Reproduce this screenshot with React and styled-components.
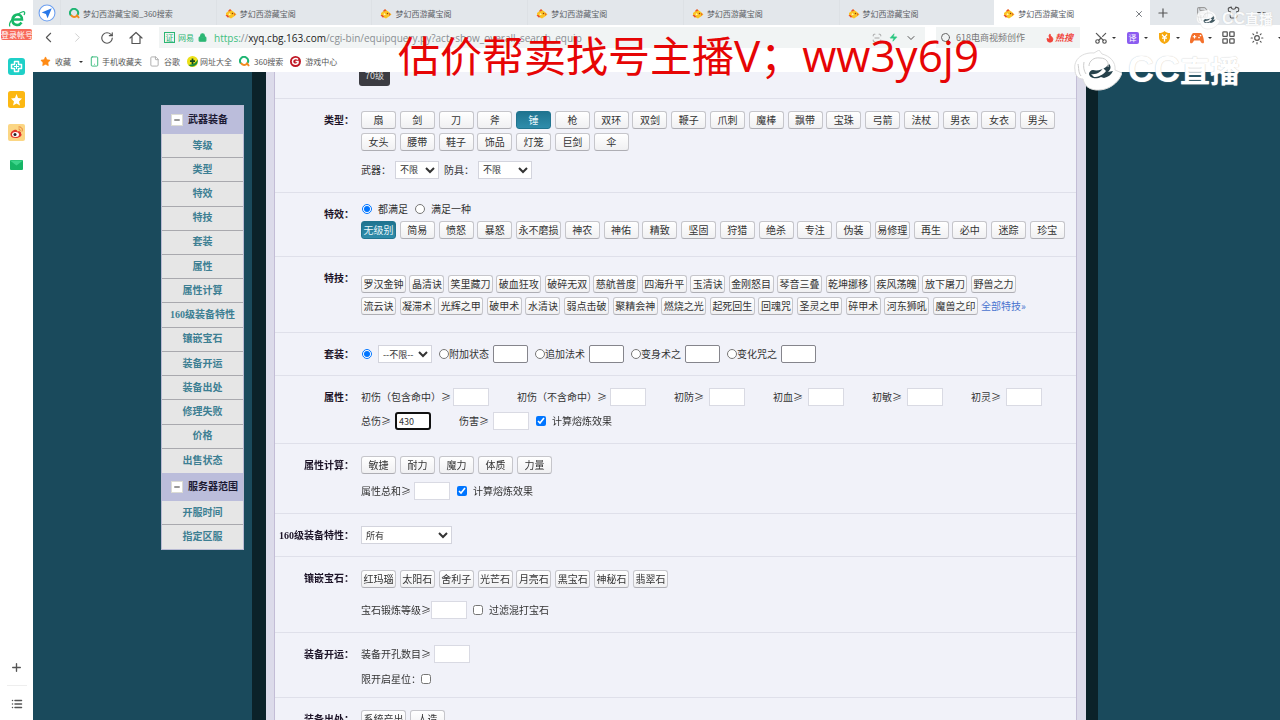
import React from "react";
import styled, { createGlobalStyle, css } from "styled-components";
import {
  ChevronLeft, ChevronRight, RotateCw, Lock, Zap, ChevronDown, Search, Flame,
  Scissors, LayoutGrid, Sun, Plus, Minus, X, Star, List, Smartphone, File, Shirt, Save, ScanLine,
} from "lucide-react";

const sans = '"Noto Sans CJK SC", "Liberation Sans", sans-serif';

const Global = createGlobalStyle`
  *, *::before, *::after { box-sizing: border-box; }
  body { margin: 0; background: #1a4a5c; overflow: hidden; }
  button, input, select { font-family: inherit; margin: 0; }
  a { color: inherit; text-decoration: none; }
`;

const Shell = styled.div`
  position: relative;
  display: flex;
  height: 100vh;
  overflow: hidden;
  font-family: ${sans};
  font-size: 10px;
  line-height: 16px;
  color: #333;
`;

/* ---------- left rail ---------- */
const Rail = styled.aside`
  flex: none;
  width: 33px;
  background: #fff;
  display: flex;
  flex-direction: column;
  align-items: center;
  padding: 10px 0 8px;
`;
const LoginTag = styled.a`
  width: 31px;
  height: 11px;
  margin: 1px 0 18px;
  border-radius: 2px;
  background: #f8695a;
  color: #fff;
  font-size: 8px;
  line-height: 11px;
  text-align: center;
  white-space: nowrap;
`;
const RailApps = styled.div`
  display: flex;
  flex-direction: column;
  gap: 16px;
  flex: 1;
`;
const IconButton = styled.button`
  display: flex;
  align-items: center;
  justify-content: center;
  flex: none;
  width: ${(p) => p.$w || 17}px;
  height: 17px;
  padding: 0;
  border: 0;
  background: none;
  color: ${(p) => p.$color || "#555"};
`;
const RailFoot = styled.div`
  display: flex;
  flex-direction: column;
  align-items: center;
  gap: 9px;
`;
const RailRule = styled.div`
  width: 20px;
  height: 1px;
  background: #eee;
`;

/* ---------- browser chrome ---------- */
const Main = styled.div`
  flex: 1;
  min-width: 0;
  display: flex;
  flex-direction: column;
`;
const TabBar = styled.div`
  flex: none;
  display: flex;
  align-items: center;
  height: 25px;
  background: #e3e7eb;
  padding-left: 4px;
`;
const TabList = styled.div`
  display: flex;
  flex: 0 1 1090px;
  min-width: 0;
  margin-left: 3px;
`;
const Tab = styled.a`
  flex: 1 1 0;
  min-width: 0;
  display: flex;
  align-items: center;
  gap: 3px;
  height: 25px;
  padding: 2px 6px 0 8px;
  font-size: 8px;
  white-space: nowrap;
  color: #5d6267;
  background: ${(p) => (p.$active ? "#fff" : "transparent")};
  border-left: 1px solid ${(p) => (p.$active ? "#fff" : "#dde1e5")};
  span { flex: 1; }
`;
const WindowTools = styled.div`
  display: flex;
  margin-left: 4px;
`;
const WindowKeys = styled.div`
  display: flex;
  gap: 11px;
  margin-left: 19px;
`;
const AddressBar = styled.div`
  flex: none;
  display: flex;
  align-items: center;
  height: 26px;
  padding: 0 0 1px 7px;
  background: #fff;
`;
const NavKeys = styled.div`
  display: flex;
  gap: 12px;
  margin-right: 15px;
`;
const UrlField = styled.div`
  flex: 1;
  min-width: 0;
  display: flex;
  align-items: center;
  height: 21px;
  padding: 0 6px 0 5px;
  background: #f1f4f4;
  color: #2bb673;
  white-space: nowrap;
`;
const Cert = styled.span`
  width: 11px;
  height: 11px;
  margin-right: 3px;
  border: 1px solid #2bb673;
  font-size: 8px;
  line-height: 9px;
  text-align: center;
`;
const Url = styled.span`
  flex: 1;
  margin-left: 7px;
  font-family: "Open Sans", sans-serif;
  font-size: 10px;
  color: #8a8f93;
  em { font-style: normal; color: #3fbf80; }
  b { font-weight: 400; color: #222; }
`;
const SiteName = styled.span`
  font-size: 8px;
  margin-right: 4px;
`;
const SearchField = styled.label`
  display: flex;
  align-items: center;
  gap: 4px;
  width: 144px;
  height: 21px;
  margin-left: 11px;
  padding-left: 4px;
  background: #f1f4f4;
  color: #666;
  input {
    width: 85px;
    padding: 0;
    border: 0;
    background: none;
    font-size: 9px;
    color: #777;
  }
`;
const Hot = styled.b`
  display: flex;
  align-items: center;
  color: #f0453c;
  font-size: 9px;
  font-style: italic;
  white-space: nowrap;
`;
const Tools = styled.div`
  display: flex;
  align-items: center;
  width: 200px;
  gap: 2px;
  padding-left: 12px;
  overflow: hidden;
`;
const Caret = styled.i`
  width: 0;
  margin: 0 6px 0 1px;
  border: 2px solid transparent;
  border-top-color: #333;
  border-bottom: 0;
`;
const TranslateMark = styled.span`
  width: 12px;
  height: 12px;
  border-radius: 2px;
  background: #8b5cf0;
  color: #fff;
  font-size: 8px;
  line-height: 12px;
  text-align: center;
`;
const Bookmarks = styled.nav`
  flex: none;
  display: flex;
  align-items: center;
  height: 21px;
  padding-left: 7px;
  background: #fff;
  font-size: 8px;
  color: #555;
`;
const Bookmark = styled.a`
  display: flex;
  align-items: center;
  gap: ${(p) => p.$gap || 2}px;
  height: 16px;
  margin-right: 7px;
  white-space: nowrap;
`;

/* ---------- page ---------- */
const Page = styled.main`
  flex: 1;
  min-height: 0;
  overflow: hidden;
  display: flex;
  justify-content: center;
  align-items: flex-start;
  padding-right: 54px;
  background: #1a4a5c;
`;
const SideMenu = styled.nav`
  flex: none;
  width: 83px;
  margin: 33px 8px 0 0;
  border: 1px solid #b9bbd4;
  background: #e6e6e6;
  font-family: "Liberation Serif", ${sans};
  font-weight: 700;
`;
const MenuHead = styled.div`
  display: flex;
  align-items: center;
  gap: 5px;
  height: 28px;
  padding-left: 9px;
  background: #bbbddb;
  color: #1c1a33;
  white-space: nowrap;
`;
const Toggle = styled.button`
  display: flex;
  align-items: center;
  justify-content: center;
  flex: none;
  width: 12px;
  height: 12px;
  padding: 0;
  border: 1px solid #dcdcd4;
  background: #fff;
  color: #333;
`;
const MenuList = styled.div`
  display: grid;
  grid-auto-rows: 1fr;
  min-height: ${(p) => p.$h}px;
`;
const MenuLink = styled.a`
  display: flex;
  align-items: center;
  justify-content: center;
  border-bottom: 1px solid #a9a9ae;
  color: #3d7f93;
  white-space: nowrap;
  &:last-child { border-bottom: 0; }
`;
const Frame = styled.div`
  flex: 0 1 846px;
  border: solid #0b2229;
  border-width: 0 12px 0 14px;
`;
const Mat = styled.div`
  padding: 0 9px 0 8px;
  background: #dcdbea;
`;
const Panel = styled.form`
  border: solid #c3bdd6;
  border-width: 0 1px;
  background: #f1f2f9;
  min-height: 100vh;
`;
const Section = styled.section`
  display: flex;
  border-bottom: 1px solid #dfe0ea;
`;
const SectionLabel = styled.h3`
  flex: none;
  width: 79px;
  margin: 0 7px 0 0;
  padding-top: 13px;
  font-family: "Liberation Serif", ${sans};
  font-size: 10px;
  line-height: 18px;
  font-weight: 700;
  text-align: right;
  white-space: nowrap;
  color: #1d1428;
`;
const SectionBody = styled.div`
  flex: 1;
  min-width: 0;
  display: flex;
  flex-direction: column;
  gap: ${(p) => p.$gap || 4}px;
  padding: ${(p) => p.$top || 12}px 0 ${(p) => p.$bottom || 12}px;
`;
const ChipGrid = styled.div`
  display: grid;
  grid-template-columns: repeat(18, 1fr);
  row-gap: 4px;
  max-width: 698px;
  margin-bottom: 5px;
`;
const ChipRow = styled.div`
  display: flex;
  flex: 0 1 auto;
  justify-content: ${(p) => (p.$w ? "space-between" : "flex-start")};
  gap: ${(p) => (p.$w ? 0 : 4)}px;
  width: ${(p) => (p.$w ? p.$w + "px" : "auto")};
  max-width: 100%;
`;
const Chip = styled.button`
  flex: none;
  width: ${(p) => (p.$long ? 45 : 35)}px;
  height: 18px;
  padding: 0;
  border: 1px solid #c6c6cb;
  border-bottom-color: #aeaeb4;
  border-radius: 3px;
  background: linear-gradient(#fff, #f0f0f2);
  color: #333;
  font-size: 10px;
  line-height: 16px;
  white-space: nowrap;
  text-align: center;
  ${(p) => p.$on && css`
    border-color: #20748f;
    background: linear-gradient(#1f7490, #2f8dab);
    color: #e6f5fa;
  `}
`;
const LevelChip = styled.button`
  align-self: flex-start;
  width: 31px;
  height: 20px;
  margin: -18px 0 0 -2px;
  padding: 0;
  border: 0;
  border-radius: 3px;
  background: #3c3c42;
  color: #ddd;
  font-size: 9px;
  line-height: 16px;
`;
const Line = styled.div`
  display: flex;
  align-items: center;
  gap: ${(p) => p.$gap || 0}px;
  height: ${(p) => p.$h || 18}px;
  white-space: nowrap;
`;
const Field = styled.label`
  display: flex;
  align-items: center;
  span { flex: none; min-width: ${(p) => p.$w || 0}px; }
`;
const TextBox = styled.input`
  width: ${(p) => (p.$strong ? 35 : 36)}px;
  height: 18px;
  padding: 0 2px;
  border: 1px solid ${(p) => (p.$strong ? "#85858c" : "#d9dae3")};
  border-radius: ${(p) => (p.$strong ? 2 : 0)}px;
  background: #fff;
  font-size: 9px;
  color: #333;
  &:focus {
    outline: 0;
    border: 2px solid #111;
    border-radius: 3px;
  }
`;
const Mark = styled.input`
  flex: none;
  width: 10px;
  height: 10px;
  &[type="radio"] { margin-left: 1px; }
`;
const Option = styled.label`
  display: flex;
  align-items: center;
  gap: ${(p) => p.$gap ?? 6}px;
`;
const Select = styled.select`
  width: ${(p) => p.$w}px;
  height: 18px;
  padding: 0;
  border: 1px solid #d3d4dd;
  background: #fff;
  color: #333;
  font-size: 9px;
`;
const MoreLink = styled.a`
  color: #4a74cf;
  line-height: 18px;
`;

/* ---------- stream overlays ---------- */
const Banner = styled.div`
  position: absolute;
  left: 398px;
  top: 25px;
  color: #e60505;
  font-family: "Open Sans", "Noto Sans CJK SC", sans-serif;
  font-size: 42px;
  line-height: 60px;
  white-space: nowrap;
  span { font-size: 44px; }
`;
const Watermark = styled.div`
  position: absolute;
  right: ${(p) => (p.$small ? 7 : 40)}px;
  top: ${(p) => (p.$small ? 8 : 50)}px;
  display: flex;
  align-items: center;
  gap: ${(p) => (p.$small ? 2 : 6)}px;
  height: ${(p) => (p.$small ? 22 : 42)}px;
  color: #fff;
  font-family: "Liberation Sans", "Noto Sans CJK SC", sans-serif;
  font-weight: 700;
  font-size: ${(p) => (p.$small ? 14 : 30)}px;
  opacity: ${(p) => (p.$small ? 0.85 : 1)};
  text-shadow: 0 0 1px #bbb;
  white-space: nowrap;
  b { font-size: ${(p) => (p.$small ? 16 : 36)}px; }
`;

const GameIcon = () => (
  <svg width="12" height="10" viewBox="0 0 24 20">
    <path d="M2 8 7 4l4-3 4 3 3 2 5 5-5 4-6 4-6-3-4-4z" fill="#fbc324" />
    <path d="M6 4 10 0l3 3-5 2zM1 12l4 0 4 4-4 1zM18 8l3 2-2 4z" fill="#e8502c" />
    <circle cx="15" cy="9" r="1.5" fill="#8a3a10" />
    <path d="m8 8 4 3-5 2z" fill="#fff6b8" />
  </svg>
);
const RingIcon = () => (
  <svg width="11" height="11" viewBox="0 0 22 22" fill="none" strokeWidth="4">
    <path d="M4 15a8 8 0 1 1 13-1" stroke="#1fb573" />
    <path d="M4 14c3 5 9 5 12 1l4 5" stroke="#f28a1e" />
  </svg>
);
const BrowserLogo = () => (
  <svg width="18" height="18" viewBox="0 0 36 36" fill="none" stroke="#18b868">
    <path d="M10 19h18c0-14-18-13-19 0-1 12 13 14 18 6" strokeWidth="5" />
    <path d="M4 33C-1 25 17 7 31 3c3 0 3 3 1 7" strokeWidth="2.5" />
  </svg>
);
const Compass = () => (
  <svg width="18" height="18" viewBox="0 0 34 34">
    <circle cx="17" cy="17" r="15" fill="#fff" stroke="#6c9ff0" strokeWidth="2" />
    <path d="M26 8 7 16l8 3 3 8z" fill="#2878e8" />
  </svg>
);
const HomeIcon = () => (
  <svg width="14" height="14" viewBox="0 0 28 28" fill="none" stroke="#555" strokeWidth="2.4" strokeLinejoin="round" strokeLinecap="round">
    <path d="M2 14 14 3l12 11M6 11v14h16V11" />
  </svg>
);
const PadIcon = () => (
  <svg width="14" height="12" viewBox="0 0 28 24">
    <path d="M7 2h14c4 0 7 12 7 18 0 4-5 4-8-3H8C5 24 0 24 0 20 0 14 3 2 7 2z" fill="#f4702b" />
    <path d="M9 6v7M5.5 9.5h7" stroke="#fff" strokeWidth="2.2" />
    <circle cx="18" cy="11" r="1.7" fill="#fff" />
    <circle cx="21" cy="7" r="1.7" fill="#fff" />
  </svg>
);
const HealthIcon = () => (
  <svg width="17" height="17" viewBox="0 0 34 34">
    <rect width="34" height="34" rx="6" fill="#1fd0c8" />
    <path d="M13 7h8v6h6v8h-6v6h-8v-6H7v-8h6z" fill="none" stroke="#fff" strokeWidth="3" strokeLinejoin="round" />
    <path d="M17 12v10M12 17h10" stroke="#fff" strokeWidth="2" />
  </svg>
);
const FavIcon = () => (
  <svg width="17" height="17" viewBox="0 0 34 34">
    <rect width="34" height="34" rx="5" fill="#fcb813" />
    <path d="m17 6 3 8 8 1-6 6 2 8-7-4-7 4 2-8-6-6 8-1z" fill="#fff" />
  </svg>
);
const WeiboIcon = () => (
  <svg width="17" height="17" viewBox="0 0 34 34">
    <rect width="34" height="34" rx="4" fill="#fbd684" />
    <path d="M5 21c0-6 8-11 12-9 2 1 1 3 1 3s9-2 8 4c4 4-3 9-10 9S5 26 5 21z" fill="#e1352c" />
    <ellipse cx="15" cy="21" rx="7" ry="5" fill="#fff" />
    <circle cx="14" cy="21" r="3" fill="#222" />
    <path d="M21 6c6-1 9 4 7 9M21 10c3 0 4 2 3 4" fill="none" stroke="#e8772c" strokeWidth="2" />
  </svg>
);
const MailIcon = () => (
  <svg width="17" height="17" viewBox="0 0 34 34">
    <rect x="4" y="6" width="26" height="20" rx="2" fill="#16b566" />
    <path d="M4 7h26L17 17z" fill="#3bd48a" />
  </svg>
);
const PortalIcon = () => (
  <svg width="11" height="11" viewBox="0 0 22 22">
    <circle cx="11" cy="11" r="11" fill="#ece019" />
    <path d="M3 18A11 11 0 0 0 21 7c-2 6-8 10-18 11z" fill="#1d8a3a" />
    <path d="M11 5v11M6 10h10" stroke="#174a20" strokeWidth="3.5" />
  </svg>
);
const GameCenterIcon = () => (
  <svg width="11" height="11" viewBox="0 0 22 22">
    <circle cx="11" cy="11" r="11" fill="#c01825" />
    <path d="M16 7c-4-4-11-1-11 4s7 8 11 3v-3h-5" fill="none" stroke="#fff" strokeWidth="3" />
  </svg>
);
const ShieldIcon = () => (
  <svg width="13" height="13" viewBox="0 0 26 26">
    <path d="M2 4c5 0 8-1 11-4 3 3 6 4 11 4v9c0 7-6 11-11 13C8 24 2 20 2 13z" fill="#f7a90f" />
    <path d="m8 7 5 6 5-6M8 14h10M13 13v8" fill="none" stroke="#fff" strokeWidth="2.5" />
  </svg>
);
const CCLogo = ({ w, h }) => (
  <svg width={w} height={h} viewBox="0 0 48 42">
    <path d="M1 20C-1 9 9 2 20 3l5-3 3 4c8 2 14 8 13 16l7 3c-3 10-14 18-26 17C12 39 10 33 9 29 4 29 1 25 1 20z" fill="#fff" stroke="#ddd" />
    <path d="M15 24c0-2 2-4 4-4 4 1 9 0 13-3l3-3c3 3 1 6-1 8l5-1c-2 4-5 6-9 7l-3-1c-4 2-11 2-12-3z" fill="#26414b" />
    <path d="M17 24c5 1 10-2 12-6l3 3c-3 4-8 6-12 6z" fill="#fff" />
    <path d="M4 14c1 4 0 8 3 12M10 12c-1 5 0 9 2 12M15 16c0-5 5-9 11-8 7 0 9 5 8 9" fill="none" stroke="#ccc" />
  </svg>
);

const types = "扇 剑 刀 斧 锤 枪 双环 双剑 鞭子 爪刺 魔棒 飘带 宝珠 弓箭 法杖 男衣 女衣 男头 女头 腰带 鞋子 饰品 灯笼 巨剑 伞".split(" ");
const effects = "无级别 简易 愤怒 暴怒 永不磨损 神农 神佑 精致 坚固 狩猎 绝杀 专注 伪装 易修理 再生 必中 迷踪 珍宝".split(" ");
const skillsA = "罗汉金钟 晶清诀 笑里藏刀 破血狂攻 破碎无双 慈航普度 四海升平 玉清诀 金刚怒目 琴音三叠 乾坤挪移 疾风荡魄 放下屠刀 野兽之力".split(" ");
const skillsB = "流云诀 凝滞术 光辉之甲 破甲术 水清诀 弱点击破 聚精会神 燃烧之光 起死回生 回魂咒 圣灵之甲 碎甲术 河东狮吼 魔兽之印".split(" ");
const gems = "红玛瑙 太阳石 舍利子 光芒石 月亮石 黑宝石 神秘石 翡翠石".split(" ");
const menuA = "等级 类型 特效 特技 套装 属性 属性计算 160级装备特性 镶嵌宝石 装备开运 装备出处 修理失败 价格 出售状态".split(" ");

const chips = (names, active) =>
  names.map((n) => (
    <Chip type="button" key={n} $long={n.length > 3} $on={n === active}>{n}</Chip>
  ));

const Block = ({ label, children, ...body }) => (
  <Section>
    <SectionLabel>{label}</SectionLabel>
    <SectionBody {...body}>{children}</SectionBody>
  </Section>
);

const NumberField = ({ label, w, ...rest }) => (
  <Field $w={w}><span>{label}</span><TextBox {...rest} /></Field>
);

export default function App() {
  return (
    <Shell>
      <Global />
      <Rail>
        <BrowserLogo />
        <LoginTag href="#">登录帐号</LoginTag>
        <RailApps>
          <IconButton aria-label="健康"><HealthIcon /></IconButton>
          <IconButton aria-label="收藏"><FavIcon /></IconButton>
          <IconButton aria-label="微博"><WeiboIcon /></IconButton>
          <IconButton aria-label="邮件"><MailIcon /></IconButton>
        </RailApps>
        <RailFoot>
          <IconButton aria-label="添加"><Plus size={13} strokeWidth={2.5} /></IconButton>
          <RailRule />
          <IconButton aria-label="列表"><List size={12} strokeWidth={3} /></IconButton>
        </RailFoot>
      </Rail>

      <Main>
        <TabBar>
          <IconButton $w={20} aria-label="导航"><Compass /></IconButton>
          <TabList>
            <Tab href="#"><RingIcon /><span>梦幻西游藏宝阁_360搜索</span></Tab>
            {[1, 2, 3, 4, 5].map((i) => (
              <Tab href="#" key={i}><GameIcon /><span>梦幻西游藏宝阁</span></Tab>
            ))}
            <Tab href="#" $active><GameIcon /><span>梦幻西游藏宝阁</span><X size={10} /></Tab>
          </TabList>
          <WindowTools>
            <IconButton aria-label="新标签"><Plus size={14} strokeWidth={2} /></IconButton>
          </WindowTools>
          <WindowKeys>
            <IconButton $w={24} $color="#999" aria-label="保存"><Save size={13} /></IconButton>
            <IconButton aria-label="皮肤"><Shirt size={13} /></IconButton>
            <IconButton aria-label="最小化"><Minus size={13} /></IconButton>
          </WindowKeys>
        </TabBar>

        <AddressBar>
          <NavKeys>
            <IconButton aria-label="后退"><ChevronLeft size={17} strokeWidth={1.5} /></IconButton>
            <IconButton aria-label="前进" $color="#ccc"><ChevronRight size={15} strokeWidth={1.5} /></IconButton>
            <IconButton aria-label="刷新"><RotateCw size={14} strokeWidth={2} /></IconButton>
            <IconButton aria-label="主页"><HomeIcon /></IconButton>
          </NavKeys>
          <UrlField>
            <Cert>证</Cert>
            <SiteName>网易</SiteName>
            <Lock size={9} fill="#2bb673" strokeWidth={3} />
            <Url><em>https:</em>//<b>xyq.cbg.163.com</b>/cgi-bin/equipquery.py?act=show_overall_search_equip</Url>
            <IconButton aria-label="扫描" $color="#999"><ScanLine size={10} /></IconButton>
            <IconButton aria-label="加速" $color="#2bc780"><Zap size={9} fill="#2bc780" strokeWidth={1} /></IconButton>
            <IconButton aria-label="展开"><ChevronDown size={12} /></IconButton>
          </UrlField>
          <SearchField>
            <Search size={12} />
            <input aria-label="搜索" defaultValue="618电商视频创作" />
            <Hot><Flame size={10} fill="#f0453c" />热搜</Hot>
          </SearchField>
          <Tools>
            <IconButton aria-label="截图"><Scissors size={14} transform="rotate(-90)" /></IconButton><Caret />
            <IconButton aria-label="翻译"><TranslateMark>译</TranslateMark></IconButton><Caret />
            <IconButton aria-label="安全"><ShieldIcon /></IconButton><Caret />
            <IconButton aria-label="游戏"><PadIcon /></IconButton><Caret />
            <IconButton aria-label="扩展"><LayoutGrid size={15} /></IconButton>
            <IconButton $w={36} aria-label="亮度"><Sun size={14} /></IconButton>
            <Caret />
          </Tools>
        </AddressBar>

        <Bookmarks>
          <Bookmark href="#" $gap={4}><Star size={11} fill="#ff8a14" color="#ff8a14" strokeWidth={1} />收藏</Bookmark>
          <Caret />
          <Bookmark href="#"><Smartphone size={11} color="#2bb673" />手机收藏夹</Bookmark>
          <Bookmark href="#" $gap={4}><File size={11} color="#aaa" />谷歌</Bookmark>
          <Bookmark href="#"><PortalIcon />网址大全</Bookmark>
          <Bookmark href="#" $gap={4}><RingIcon />360搜索</Bookmark>
          <Bookmark href="#" $gap={4}><GameCenterIcon />游戏中心</Bookmark>
        </Bookmarks>

        <Page>
          <SideMenu>
            <MenuHead><Toggle type="button" aria-label="收起武器装备"><Minus size={8} strokeWidth={3} /></Toggle>武器装备</MenuHead>
            <MenuList $h={339}>
              {menuA.map((m) => <MenuLink href="#" key={m}>{m}</MenuLink>)}
            </MenuList>
            <MenuHead><Toggle type="button" aria-label="收起服务器范围"><Minus size={8} strokeWidth={3} /></Toggle>服务器范围</MenuHead>
            <MenuList $h={48}>
              <MenuLink href="#">开服时间</MenuLink>
              <MenuLink href="#">指定区服</MenuLink>
            </MenuList>
          </SideMenu>

          <Frame>
            <Mat>
              <Panel onSubmit={(e) => e.preventDefault()}>
                <Block label="">
                  <LevelChip type="button">70级</LevelChip>
                </Block>

                <Block label="类型：" $bottom={13}>
                  <ChipGrid>{chips(types, "锤")}</ChipGrid>
                  <Line $gap={5} $h={19}>
                    <Option $gap={4}>武器：<Select $w={44}><option>不限</option></Select></Option>
                    <Option $gap={4}>防具：<Select $w={54}><option>不限</option></Select></Option>
                  </Line>
                </Block>

                <Block label="特效：" $top={8} $bottom={17}>
                  <Line $gap={6} $h={16}>
                    <Option><Mark type="radio" name="fx" defaultChecked />都满足</Option>
                    <Option><Mark type="radio" name="fx" />满足一种</Option>
                  </Line>
                  <ChipRow $w={704}>{chips(effects, "无级别")}</ChipRow>
                </Block>

                <Block label="特技：" $top={18} $bottom={17}>
                  <ChipRow $w={655}>{chips(skillsA)}</ChipRow>
                  <Line $gap={3}>
                    <ChipRow $w={617}>{chips(skillsB)}</ChipRow>
                    <MoreLink href="#">全部特技»</MoreLink>
                  </Line>
                </Block>

                <Block label="套装：">
                  <Line $gap={6}>
                    <Mark type="radio" name="suit" aria-label="不限" defaultChecked />
                    <Select $w={54} aria-label="套装"><option>--不限--</option></Select>
                    {["附加状态", "追加法术", "变身术之", "变化咒之"].map((n) => (
                      <Line key={n} $gap={4}>
                        <Option $gap={0}><Mark type="radio" name="suit" />{n}</Option>
                        <TextBox $strong aria-label={n} />
                      </Line>
                    ))}
                  </Line>
                </Block>

                <Block label="属性：" $gap={6} $bottom={13}>
                  <Line $gap={28}>
                    <NumberField w={92} label="初伤（包含命中）≥" />
                    <NumberField w={93} label="初伤（不含命中）≥" />
                    <NumberField w={35} label="初防≥" />
                    <NumberField w={35} label="初血≥" />
                    <NumberField w={35} label="初敏≥" />
                    <NumberField w={35} label="初灵≥" />
                  </Line>
                  <Line $gap={28}>
                    <NumberField w={34} label="总伤≥" defaultValue="430" autoFocus />
                    <Line $gap={7}>
                      <NumberField w={34} label="伤害≥" />
                      <Option><Mark type="checkbox" defaultChecked />计算熔炼效果</Option>
                    </Line>
                  </Line>
                </Block>

                <Block label="属性计算：" $gap={8} $bottom={13}>
                  <ChipRow>{chips(["敏捷", "耐力", "魔力", "体质", "力量"])}</ChipRow>
                  <Line $gap={7}>
                    <NumberField w={53} label="属性总和≥" />
                    <Option><Mark type="checkbox" defaultChecked />计算熔炼效果</Option>
                  </Line>
                </Block>

                <Block label="160级装备特性：">
                  <Select $w={91} aria-label="160级装备特性"><option>所有</option></Select>
                </Block>

                <Block label="镶嵌宝石：" $top={13} $gap={13} $bottom={13}>
                  <ChipRow $w={307}>{chips(gems)}</ChipRow>
                  <Line $gap={6}>
                    <NumberField label="宝石锻炼等级≥" />
                    <Option>
                      <Mark type="checkbox" />过滤混打宝石
                    </Option>
                  </Line>
                </Block>

                <Block label="装备开运：" $gap={8} $bottom={10}>
                  <Line><NumberField w={73} label="装备开孔数目≥" /></Line>
                  <Line $h={16}><Option $gap={0}>限开启星位：<Mark type="checkbox" /></Option></Line>
                </Block>

                <Block label="装备出处：">
                  <ChipRow>{chips(["系统产出", "人造"])}</ChipRow>
                </Block>
              </Panel>
            </Mat>
          </Frame>
        </Page>
      </Main>

      <Banner>估价帮卖找号主播<span>V</span>；<span>ww3y6j9</span></Banner>
      <Watermark $small><CCLogo w={24} h={21} /><span><b>CC</b>直播</span></Watermark>
      <Watermark><CCLogo w={48} h={42} /><span><b>CC</b>直播</span></Watermark>
    </Shell>
  );
}
